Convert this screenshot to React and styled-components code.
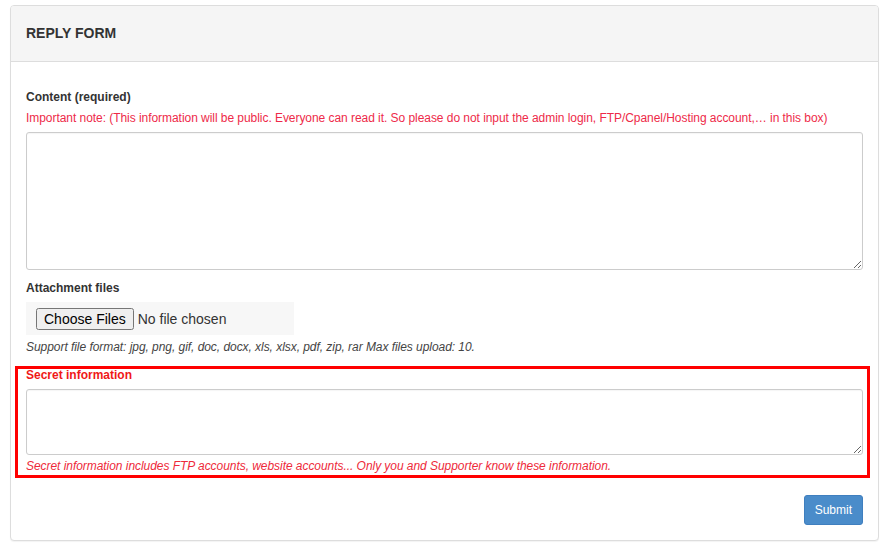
import React from 'react';
import styled, { createGlobalStyle } from "styled-components";

const GlobalStyle = createGlobalStyle`
  body {
    margin: 0;
    background: #fff;
    font-family: "Liberation Sans", Arial, sans-serif;
    color: #333;
  }
`
const Page = styled.div`
  padding: 5px 9px 10px 10px;
`
const Panel = styled.div`
  border: 1px solid #ddd;
  border-radius: 4px;
  background: #fff;
  box-shadow: 0 1px 1px rgba(0,0,0,0.05);
`
const PanelHeader = styled.div`
  background: #f5f5f5;
  border-bottom: 1px solid #ddd;
  border-radius: 3px 3px 0 0;
  box-sizing: border-box;
  height: 56px;
  padding: 0 15px 2px;
  display: flex;
  align-items: center;
`
const Title = styled.h3`
  margin: 0;
  font-size: 14px;
  font-weight: bold;
  color: #333;
  text-transform: uppercase;
`
const PanelBody = styled.form`
  padding: 27px 15px 15px;
  display: flex;
  flex-direction: column;
`
const Label = styled.label`
  font-size: 12px;
  line-height: ${p => p.$danger ? 13 : 17}px;
  font-weight: bold;
  color: ${p => p.$danger ? '#f01818' : '#333'};
`
const Note = styled.div`
  font-size: 12px;
  line-height: 17px;
  letter-spacing: -0.05px;
  color: #ee2a49;
  margin-top: 4px;
`
const TextArea = styled.textarea`
  display: block;
  box-sizing: border-box;
  width: 100%;
  height: ${p => p.$height}px;
  margin-top: ${p => p.$gap}px;
  border: 1px solid #ccc;
  border-radius: 3px;
  padding: 6px 12px;
  font-family: inherit;
  font-size: 14px;
  box-shadow: inset 0 1px 1px rgba(0,0,0,0.04);
`
const Group = styled.div`
  margin-top: ${p => p.$gap || 0}px;
  display: flex;
  flex-direction: column;
  align-items: flex-start;
`
const FileInput = styled.input`
  box-sizing: border-box;
  width: 268px;
  height: 33px;
  margin-top: 5px;
  padding: 6px 10px;
  background: #f7f7f7;
  font-family: "Liberation Sans", Arial, sans-serif;
  font-size: 14px;
  color: #333;
`
const Help = styled.div`
  font-size: 12px;
  line-height: 17px;
  letter-spacing: -0.05px;
  font-style: italic;
  color: ${p => p.$danger ? '#ee2a3a' : '#444'};
  margin-top: ${p => p.$gap || 0}px;
`
const SecretBox = styled.div`
  margin: 10px -7px 0 -11px;
  border: 3px solid #ff0000;
  padding: 0 4px 0 8px;
  display: flex;
  flex-direction: column;
`
const Actions = styled.div`
  display: flex;
  justify-content: flex-end;
  margin-top: 17px;
`
const SubmitButton = styled.button`
  background: #4a8cca;
  border: 1px solid #3f7fbf;
  border-radius: 3px;
  color: #fff;
  font-family: inherit;
  font-size: 12px;
  line-height: 18px;
  padding: 5px 10px;
  cursor: pointer;
`

function App() {
  return (
    <Page>
      <GlobalStyle />
      <Panel>
        <PanelHeader>
          <Title>Reply form</Title>
        </PanelHeader>
        <PanelBody onSubmit={e => e.preventDefault()}>
          <Label>Content (required)</Label>
          <Note>Important note: (This information will be public. Everyone can read it. So please do not input the admin login, FTP/Cpanel/Hosting account,… in this box)</Note>
          <TextArea $height={138} $gap={5} />

          <Group $gap={10}>
            <Label>Attachment files</Label>
            <FileInput type="file" multiple />
          </Group>
          <Help $gap={4}>Support file format: jpg, png, gif, doc, docx, xls, xlsx, pdf, zip, rar Max files upload: 10.</Help>

          <SecretBox>
            <Label $danger>Secret information</Label>
            <TextArea $height={66} $gap={7} />
            <Help $danger $gap={3}>Secret information includes FTP accounts, website accounts... Only you and Supporter know these information.</Help>
          </SecretBox>

          <Actions>
            <SubmitButton type="submit">Submit</SubmitButton>
          </Actions>
        </PanelBody>
      </Panel>
    </Page>
  )
}

export default App;
